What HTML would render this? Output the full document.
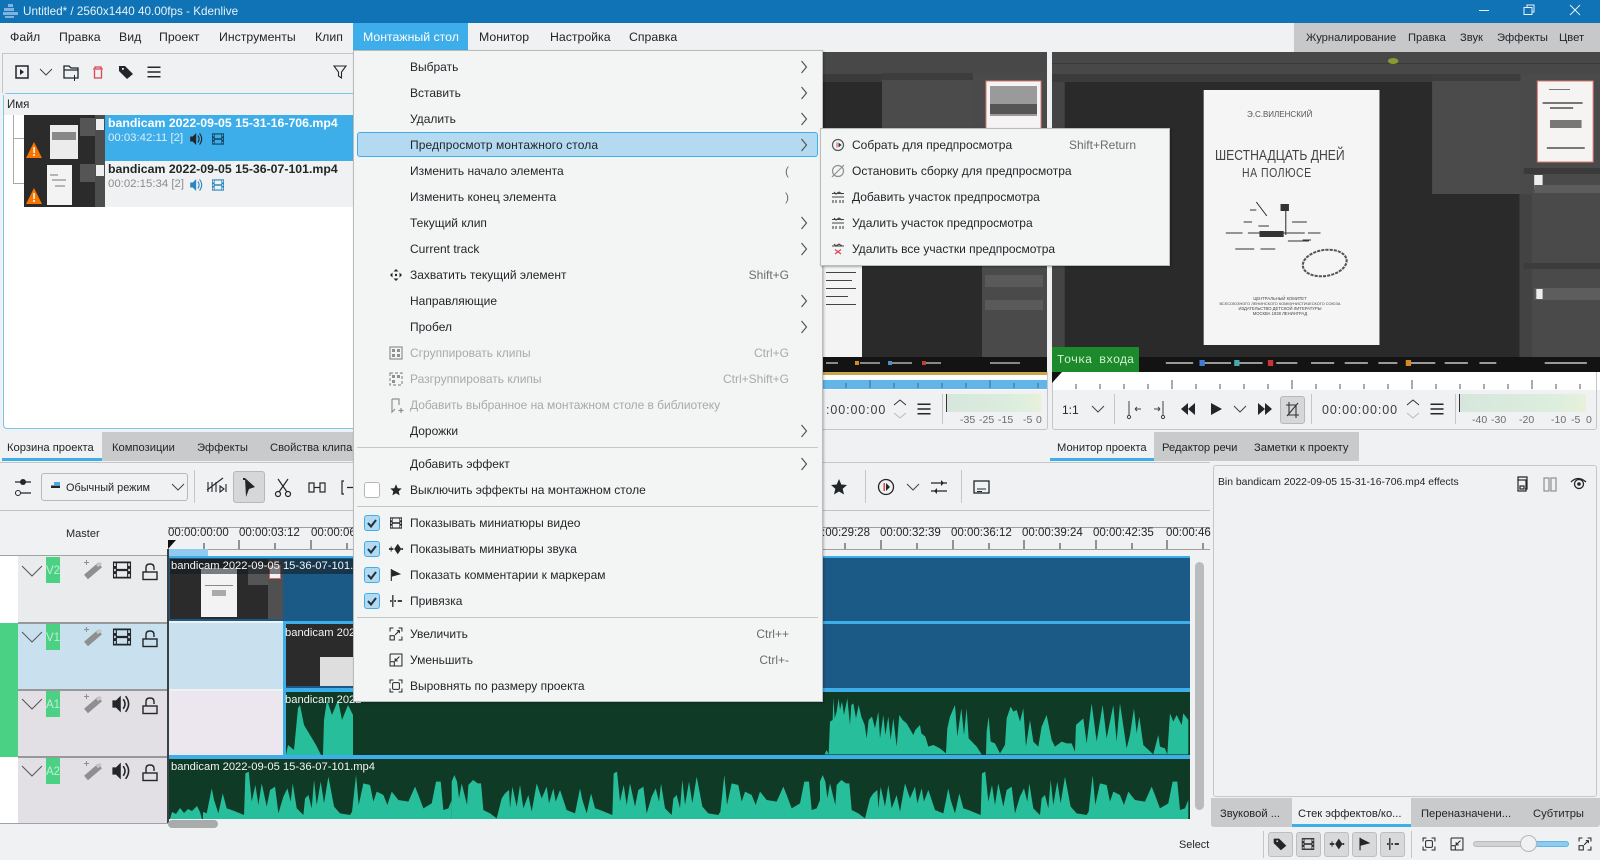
<!DOCTYPE html>
<html lang="ru"><head><meta charset="utf-8"><title>Kdenlive</title>
<style>
html,body{margin:0;padding:0;width:1600px;height:860px;overflow:hidden;background:#eff1f2}
body{position:relative;font-family:"Liberation Sans","Noto Sans CJK SC",sans-serif;font-size:12px;color:#232629}
.b,.t,svg.l{position:absolute}
.t{white-space:nowrap;line-height:16px;height:16px}
svg.l{left:0;top:0}
.dis{color:#a7a9ab}.sc{color:#6a6c6e}
.mono{font-family:"Liberation Mono",monospace}
.mb{font-size:12.3px}
.wk{font-size:11.2px}
.tb{font-size:11.2px}
</style></head><body>

<!-- title bar -->
<div class="b" style="left:0;top:0;width:1600px;height:23px;background:#0f73b5"></div>
<div class="t" style="left:23px;top:4px;color:#e8f2f9;font-size:11.7px">Untitled* / 2560x1440 40.00fps - Kdenlive</div>
<!-- menubar -->
<div class="b" style="left:353px;top:23px;width:115px;height:28px;background:#3daee9"></div>
<div class="b" style="left:1294px;top:23px;width:306px;height:29px;background:#c6c8ca"></div>
<div class="t mb" style="left:10px;top:29px">Файл</div>
<div class="t mb" style="left:59px;top:29px">Правка</div>
<div class="t mb" style="left:119px;top:29px">Вид</div>
<div class="t mb" style="left:159px;top:29px">Проект</div>
<div class="t mb" style="left:219px;top:29px">Инструменты</div>
<div class="t mb" style="left:315px;top:29px">Клип</div>
<div class="t mb" style="left:363px;top:29px;color:#fff">Монтажный стол</div>
<div class="t mb" style="left:479px;top:29px">Монитор</div>
<div class="t mb" style="left:550px;top:29px">Настройка</div>
<div class="t mb" style="left:629px;top:29px">Справка</div>
<div class="t wk" style="left:1306px;top:30px">Журналирование</div>
<div class="t wk" style="left:1408px;top:30px">Правка</div>
<div class="t wk" style="left:1460px;top:30px">Звук</div>
<div class="t wk" style="left:1497px;top:30px">Эффекты</div>
<div class="t wk" style="left:1559px;top:30px">Цвет</div>

<!-- project bin -->
<div class="b" style="left:2px;top:53px;width:351px;height:40px;border-top:1px solid #c4c6c8;border-left:1px solid #c4c6c8;box-sizing:border-box"></div>
<div class="b" style="left:3px;top:93px;width:360px;height:336px;background:#fff;border:1px solid #7cc6ec;border-radius:4px;box-sizing:border-box"></div>
<div class="b" style="left:4px;top:94px;width:349px;height:21px;background:#eff1f2"></div>
<div class="t" style="left:7px;top:97px;font-size:11.5px">Имя</div>
<div class="b" style="left:105px;top:115px;width:248px;height:46px;background:#3daee9"></div>
<div class="b" style="left:105px;top:161px;width:248px;height:46px;background:#eff1f2"></div>
<div class="b" style="left:13px;top:115px;width:11px;height:23px;border-left:1px solid #aaa;border-bottom:1px solid #aaa"></div>
<div class="b" style="left:13px;top:138px;width:11px;height:45px;border-left:1px solid #aaa;border-bottom:1px solid #aaa"></div>
<div class="t" style="left:108px;top:115px;color:#fff;font-weight:bold;font-size:12.3px">bandicam 2022-09-05 15-31-16-706.mp4</div>
<div class="t" style="left:108px;top:130px;color:#dceefa;font-size:11.4px">00:03:42:11 [2]</div>
<div class="t" style="left:108px;top:161px;font-weight:bold;font-size:12.3px">bandicam 2022-09-05 15-36-07-101.mp4</div>
<div class="t" style="left:108px;top:176px;color:#8a8c8e;font-size:11.4px">00:02:15:34 [2]</div>

<!-- bin tabs -->
<div class="b" style="left:102px;top:432px;width:252px;height:29px;background:#c8cacb"></div>
<div class="b" style="left:2px;top:458px;width:100px;height:3px;background:#3daee9"></div>
<div class="b" style="left:0;top:462px;width:1210px;height:1px;background:#c4c6c8"></div>
<div class="t tb" style="left:7px;top:440px">Корзина проекта</div>
<div class="t tb" style="left:112px;top:440px">Композиции</div>
<div class="t tb" style="left:197px;top:440px">Эффекты</div>
<div class="t tb" style="left:270px;top:440px">Свойства клипа</div>

<!-- timeline toolbar -->
<div class="b" style="left:41px;top:473px;width:147px;height:28px;border:1px solid #b6b8ba;border-radius:3px;box-sizing:border-box;background:#eff1f2"></div>
<div class="t" style="left:66px;top:480px;font-size:10.9px">Обычный режим</div>
<div class="b" style="left:194px;top:470px;width:1px;height:33px;background:#c4c6c8"></div>
<div class="b" style="left:233px;top:471px;width:32px;height:32px;background:#d5d7d9;border:1px solid #b6b8ba;border-radius:3px;box-sizing:border-box"></div>
<div class="b" style="left:0;top:510px;width:1210px;height:1px;background:#c0c2c4"></div>
<div class="t" style="left:66px;top:526px;font-size:11px">Master</div>

<!-- ruler -->
<div class="b" style="left:168px;top:527px;width:1042px;height:1px;background:#9c9ea0"></div>
<div class="b" style="left:168px;top:549px;width:1042px;height:1px;background:#9c9ea0"></div>
<div class="t" style="left:168px;top:525px;font-size:11.5px">00:00:00:00</div>
<div class="t" style="left:239px;top:525px;font-size:11.5px">00:00:03:12</div>
<div class="t" style="left:311px;top:525px;font-size:11.5px">00:00:06</div>
<div class="t" style="left:822px;top:525px;font-size:11.5px">:00:29:28</div>
<div class="t" style="left:880px;top:525px;font-size:11.5px">00:00:32:39</div>
<div class="t" style="left:951px;top:525px;font-size:11.5px">00:00:36:12</div>
<div class="t" style="left:1022px;top:525px;font-size:11.5px">00:00:39:24</div>
<div class="t" style="left:1093px;top:525px;font-size:11.5px">00:00:42:35</div>
<div class="t" style="left:1166px;top:525px;font-size:11.5px">00:00:46</div>
<div class="b" style="left:168px;top:549px;width:40px;height:7px;background:#8fcaef"></div>

<!-- track headers -->
<div class="b" style="left:0;top:556px;width:18px;height:67px;background:#fff"></div>
<div class="b" style="left:0;top:623px;width:18px;height:134px;background:#4bd184"></div>
<div class="b" style="left:0;top:757px;width:18px;height:66px;background:#fff"></div>
<div class="b" style="left:18px;top:556px;width:150px;height:66px;background:#eaebec"></div>
<div class="b" style="left:18px;top:623px;width:150px;height:67px;background:#c9e0ee"></div>
<div class="b" style="left:18px;top:691px;width:150px;height:66px;background:#e3e0e5"></div>
<div class="b" style="left:18px;top:758px;width:150px;height:65px;background:#e3e0e5"></div>
<div class="b" style="left:0;top:555px;width:168px;height:1px;background:#a0a2a4"></div>
<div class="b" style="left:18px;top:622px;width:150px;height:2px;background:#96989a"></div>
<div class="b" style="left:18px;top:689px;width:150px;height:2px;background:#96989a"></div>
<div class="b" style="left:18px;top:756px;width:150px;height:2px;background:#96989a"></div>
<div class="b" style="left:0;top:823px;width:168px;height:1px;background:#a0a2a4"></div>
<div class="b" style="left:46px;top:557px;width:14px;height:26px;background:#4bd184"></div>
<div class="b" style="left:46px;top:624px;width:14px;height:26px;background:#4bd184"></div>
<div class="b" style="left:46px;top:691px;width:14px;height:26px;background:#4bd184"></div>
<div class="b" style="left:46px;top:758px;width:14px;height:26px;background:#4bd184"></div>
<div class="t" style="left:46px;top:563px;width:14px;text-align:center;font-size:11.5px;color:#c4ecd4">V2</div>
<div class="t" style="left:46px;top:630px;width:14px;text-align:center;font-size:11.5px;color:#c4ecd4">V1</div>
<div class="t" style="left:46px;top:697px;width:14px;text-align:center;font-size:11.5px;color:#c4ecd4">A1</div>
<div class="t" style="left:46px;top:764px;width:14px;text-align:center;font-size:11.5px;color:#c4ecd4">A2</div>

<!-- tracks background -->
<div class="b" style="left:169px;top:623px;width:115px;height:66px;background:#c9e0ee"></div>
<div class="b" style="left:169px;top:691px;width:115px;height:66px;background:#ece7ef"></div>
<div class="b" style="left:169px;top:556px;width:1021px;height:65px;background:#1b5a86;border-top:2px solid #3daee9;box-sizing:border-box"></div>
<div class="b" style="left:170px;top:559px;width:113px;height:60px;background:#2b2b2b"></div>
<div class="b" style="left:201px;top:568px;width:36px;height:49px;background:#f3f3f3"></div>
<div class="b" style="left:205px;top:585px;width:28px;height:1px;background:#888"></div>
<div class="b" style="left:212px;top:590px;width:14px;height:6px;background:#aaa"></div>
<div class="b" style="left:248px;top:565px;width:20px;height:20px;background:#555"></div>
<div class="b" style="left:268px;top:559px;width:15px;height:60px;background:#505050"></div>
<div class="b" style="left:269px;top:565px;width:12px;height:14px;background:#f4f4f4;border:1px solid #d66;box-sizing:border-box"></div>
<div class="b" style="left:283px;top:621px;width:907px;height:68px;background:#1b5a86;border-top:3px solid #3daee9;border-left:3px solid #3daee9;box-sizing:border-box"></div>
<div class="b" style="left:286px;top:624px;width:67px;height:62px;background:#2b2b2b"></div>
<div class="b" style="left:320px;top:657px;width:33px;height:29px;background:#dedede"></div>
<div class="b" style="left:283px;top:688px;width:907px;height:70px;background:#0f3a26;border-top:4px solid #3daee9;border-left:3px solid #3daee9;box-sizing:border-box"></div>
<div class="b" style="left:169px;top:755px;width:1021px;height:64px;background:#0f3a26;border-top:4px solid #3daee9;box-sizing:border-box"></div>
<svg class="l" width="1600" height="860" viewBox="0 0 1600 860">
<defs>
<path id="w2" fill="#27bf9b" d="M0 403L0 290 8 270 16 290 22 340 30 295 46 360 50 300 64 285 78 295 88 295 95 375 115 385 135 400 150 340 160 325 172 315 175 370 182 305 195 365 205 300 215 370 230 330 240 380 255 295 270 340 285 305 292 355 305 310 312 350 325 315 345 375 370 385 385 310 392 345 405 385 418 325 430 370 445 375 470 385 482 390 486 265 496 260 505 350 516 300 525 360 535 295 550 365 560 315 575 305 585 385 600 335 612 310 622 350 628 295 640 370 660 390 665 340 675 330 685 370 692 285 700 360 712 290 722 355 735 275 752 365 770 385 800 390 806 380 818 270 826 360 840 295 860 300 870 350 880 320 900 330 912 360 925 320 945 345 975 350 995 305 1005 330 1020 370 1045 355 1058 290 1072 290 1080 375 1095 370 1105 345 1105 403Z"/>
<clipPath id="c2"><rect x="169" y="759" width="1021" height="60"/></clipPath>
</defs>
<path fill="#27bf9b" d="M286 755L288 745 294 750 298 708 300 705 304 725 316 745 321 755 323 755 324 720 327 700 332 715 338 700 342 720 348 705 353 715V755Z"/>
<g transform="translate(820 685) scale(.3333)">
<path fill="#27bf9b" d="M0 208L14 208 20 195 26 208 30 110 38 105 40 38 44 100 50 80 56 40 60 75 66 50 72 90 82 40 90 120 94 60 100 55 108 100 116 60 124 95 134 120 140 160 146 105 156 95 165 130 175 80 180 160 190 90 196 150 205 95 212 165 220 100 230 185 238 90 248 105 260 115 280 150 286 135 300 120 304 145 316 155 325 185 340 180 360 190 378 205 382 130 390 95 405 60 412 155 424 70 432 150 440 70 446 160 470 185 485 208 498 208 500 140 506 95 512 170 525 175 540 205 555 180 560 100 572 65 580 80 590 75 600 110 610 70 618 185 630 105 640 170 655 185 665 125 680 90 695 165 705 185 725 170 740 175 755 175 765 200 768 120 790 100 800 175 815 55 830 170 848 60 860 160 880 60 890 170 900 55 920 190 930 150 942 70 950 145 958 95 970 180 1000 208 1015 150 1020 185 1035 190 1042 208 1050 85 1060 110 1070 90 1085 120 1090 85 1105 105V208Z"/>
</g>
<g clip-path="url(#c2)"><g transform="translate(820 685) scale(.3333)">
<use href="#w2"/>
<use href="#w2" x="-1105"/>
<use href="#w2" x="-2210"/>
</g></g>
<rect x="169" y="759" width="34" height="60" fill="#0f3a26"/>
<path fill="#27bf9b" d="M170 819L172 812 176 814 180 808 184 813 188 809 192 811 197 806 200 812 202 819Z"/>
</svg>
<div class="b" style="left:167px;top:549px;width:2px;height:274px;background:#3b4045"></div>
<div class="b" style="left:170px;top:559px;width:206px;height:15px;background:rgba(20,25,30,.55)"></div>
<div class="t" style="left:171px;top:558px;color:#f4f4f4;font-size:11.2px">bandicam 2022-09-05 15-36-07-101.m</div>
<div class="t" style="left:285px;top:625px;color:#f4f4f4;font-size:11.2px">bandicam 2022</div>
<div class="t" style="left:285px;top:692px;color:#f4f4f4;font-size:11.2px">bandicam 2022</div>
<div class="t" style="left:171px;top:759px;color:#f4f4f4;font-size:11.2px">bandicam 2022-09-05 15-36-07-101.mp4</div>
<div class="b" style="left:1195px;top:562px;width:9px;height:248px;background:#b9bbbd;border-radius:5px"></div>
<div class="b" style="left:168px;top:820px;width:50px;height:8px;background:#a8aaac;border-radius:4px"></div>

<!-- monitors: video -->
<svg class="l" width="1600" height="860" viewBox="0 0 1600 860">
<!-- left monitor -->
<rect x="822" y="52" width="225" height="320" fill="#2a2a2a"/>
<rect x="822" y="52" width="225" height="22" fill="#484848"/>
<rect x="822" y="74" width="225" height="8" fill="#3a3a3a"/>
<rect x="882" y="73" width="91" height="60" fill="#4b4b4b"/>
<rect x="882" y="73" width="91" height="7" fill="#3d3d3d"/>
<rect x="973" y="73" width="74" height="62" fill="#4a4a4a"/>
<rect x="982" y="135" width="65" height="228" fill="#4a4a4a"/>
<rect x="986" y="81" width="55" height="50" fill="#f5f3f3" stroke="#d97a72"/>
<rect x="990" y="86" width="47" height="30" fill="#9a9a9a"/>
<rect x="990" y="104" width="47" height="10" fill="#555"/>
<rect x="822" y="262" width="40" height="95" fill="#f4f4f4"/>
<g fill="#444"><rect x="826" y="272" width="30" height="1"/><rect x="826" y="280" width="26" height="1"/><rect x="826" y="288" width="30" height="1"/><rect x="826" y="296" width="22" height="1"/><rect x="826" y="304" width="30" height="1"/></g>
<rect x="985" y="275" width="58" height="12" fill="#5a5a5a"/><rect x="985" y="300" width="58" height="10" fill="#5a5a5a"/>
<rect x="822" y="357" width="225" height="15" fill="#131313"/>
<g fill="#888"><rect x="826" y="362" width="12" height="2"/><rect x="860" y="362" width="20" height="2"/><rect x="890" y="362" width="22" height="2"/><rect x="925" y="362" width="16" height="2"/><rect x="990" y="362" width="30" height="2"/></g>
<rect x="855" y="361" width="4" height="4" fill="#d68a20"/><rect x="888" y="361" width="4" height="4" fill="#4a8ed0"/><rect x="922" y="361" width="4" height="4" fill="#c04030"/>
<!-- right monitor -->
<g transform="translate(1050 0) scale(1.0526 1) translate(-1050 0)">
<rect x="1052" y="52" width="548" height="320" fill="#2a2a2a"/>
<rect x="1052" y="52" width="548" height="22" fill="#484848"/>
<rect x="1052" y="63" width="548" height="1" fill="#3a3a3a"/>
<rect x="1052" y="74" width="548" height="8" fill="#3b3b3b"/>
<rect x="1052" y="82" width="12" height="275" fill="#444"/>
<rect x="1413" y="74" width="84" height="120" fill="#4b4b4b"/>
<rect x="1413" y="74" width="84" height="7" fill="#3d3d3d"/>
<rect x="1497" y="74" width="103" height="283" fill="#4a4a4a"/>
<rect x="1496" y="194" width="12" height="163" fill="#434343"/>
<ellipse cx="1376" cy="61" rx="5" ry="3" fill="#8a9a30"/>
<rect x="1513" y="81" width="53" height="81" fill="#f6f3f3" stroke="#d97a72"/>
<g fill="#777"><rect x="1524" y="89" width="20" height="1"/><rect x="1518" y="102" width="38" height="2"/><rect x="1525" y="107" width="22" height="2"/><rect x="1525" y="120" width="30" height="8"/><rect x="1522" y="147" width="36" height="2"/></g>
<rect x="1500" y="168" width="100" height="6" fill="#3a3a3a"/>
<rect x="1510" y="175" width="8" height="14" fill="#eee"/><rect x="1510" y="185" width="88" height="8" fill="#5d5d5d"/>
<rect x="1500" y="263" width="100" height="6" fill="#3c3c3c"/>
<rect x="1510" y="288" width="88" height="12" fill="#5d5d5d"/><rect x="1512" y="289" width="6" height="10" fill="#eee"/>
<rect x="1196" y="90" width="167" height="255" fill="#f5f5f5"/>
<!-- book drawing -->
<g stroke="#333" fill="none" stroke-width="1">
<path d="M1246 202l10 14M1274 205v30M1217 233h16m5 0h22m4 0h28m3 0h12M1226 249h18m6 0h14m12-8h20M1234 222h8m6 4h10M1290 240h8M1240 210h6M1280 222h14"/>
</g>
<rect x="1249" y="231" width="23" height="6" fill="#333"/>
<rect x="1269" y="204" width="8" height="7" fill="#333"/>
<ellipse cx="1311" cy="263" rx="21" ry="13" fill="none" stroke="#555" stroke-width="2" stroke-dasharray="3 1" transform="rotate(-10 1311 263)"/>
<!-- taskbar -->
<rect x="1052" y="357" width="548" height="15" fill="#131313"/>
<g fill="#999"><rect x="1160" y="362" width="26" height="2"/><rect x="1196" y="362" width="26" height="2"/><rect x="1230" y="362" width="22" height="2"/><rect x="1265" y="362" width="20" height="2"/><rect x="1298" y="362" width="22" height="2"/><rect x="1330" y="362" width="22" height="2"/><rect x="1362" y="362" width="18" height="2"/><rect x="1390" y="362" width="26" height="2"/><rect x="1425" y="362" width="22" height="2"/><rect x="1458" y="362" width="16" height="2"/><rect x="1520" y="362" width="40" height="2"/></g>
<rect x="1192" y="360" width="5" height="6" fill="#3a7fd0"/><rect x="1225" y="360" width="5" height="6" fill="#4aa"/><rect x="1257" y="360" width="5" height="6" fill="#c33"/><rect x="1388" y="360" width="5" height="6" fill="#d68a20"/>
</g>
</svg>
<div class="t" style="left:1247px;top:107px;font-size:8px;color:#555">Э.С.ВИЛЕНСКИЙ</div>
<div class="t" style="left:1215px;top:148px;font-size:14.5px;color:#444;transform:scaleX(.84);transform-origin:left center">ШЕСТНАДЦАТЬ ДНЕЙ</div>
<div class="t" style="left:1242px;top:165px;font-size:12.5px;color:#444;letter-spacing:.6px;transform:scaleX(.84);transform-origin:left center">НА ПОЛЮСЕ</div>
<div class="t" style="left:1215px;width:130px;text-align:center;top:296px;font-size:4.2px;color:#444;line-height:5px;height:5px">ЦЕНТРАЛЬНЫЙ КОМИТЕТ</div>
<div class="t" style="left:1215px;width:130px;text-align:center;top:301px;font-size:3.9px;color:#444;line-height:5px;height:5px">ВСЕСОЮЗНОГО ЛЕНИНСКОГО КОММУНИСТИЧЕСКОГО СОЮЗА</div>
<div class="t" style="left:1215px;width:130px;text-align:center;top:306px;font-size:4.2px;color:#444;line-height:5px;height:5px">ИЗДАТЕЛЬСТВО ДЕТСКОЙ ЛИТЕРАТУРЫ</div>
<div class="t" style="left:1215px;width:130px;text-align:center;top:311px;font-size:4.2px;color:#444;line-height:5px;height:5px">МОСКВА 1938 ЛЕНИНГРАД</div>
<div class="b" style="left:1052px;top:347px;width:87px;height:25px;background:#1c8a2a"></div>
<div class="t mono" style="left:1057px;top:352px;font-size:12px;letter-spacing:-.2px;color:#d6f0d8">Точка входа</div>

<!-- monitor rulers and controls -->
<div class="b" style="left:822px;top:372px;width:225px;height:18px;background:#fff"></div>
<div class="b" style="left:822px;top:372px;width:225px;height:3px;background:#c9a64a"></div>
<div class="b" style="left:822px;top:380px;width:225px;height:9px;background:#62b5e8"></div>
<div class="b" style="left:1052px;top:372px;width:548px;height:18px;background:#fff"></div>
<div class="b" style="left:822px;top:372px;width:226px;height:58px;border-right:1px solid #c4c6c8;border-bottom:1px solid #c4c6c8;border-radius:0 0 3px 0;box-sizing:border-box"></div>
<div class="b" style="left:1052px;top:372px;width:545px;height:58px;border:1px solid #c4c6c8;border-top:0;border-radius:0 0 3px 3px;box-sizing:border-box"></div>
<div class="b" style="left:946px;top:394px;width:95px;height:18px;background:linear-gradient(90deg,#d6e6dc,#dceede 75%,#e8f0da)"></div>
<div class="b" style="left:1459px;top:394px;width:127px;height:18px;background:linear-gradient(90deg,#d6e6dc,#dceede 75%,#e8f0da)"></div>
<div class="b" style="left:1280px;top:396px;width:25px;height:28px;background:#d5d7d9;border:1px solid #b6b8ba;border-radius:3px;box-sizing:border-box"></div>
<div class="t" style="left:1062px;top:402px;font-size:12px">1:1</div>
<div class="t" style="left:1322px;top:402px;font-size:12.5px;letter-spacing:.9px;color:#3a3d40">00:00:00:00</div>
<div class="t" style="left:826px;top:402px;font-size:12.5px;letter-spacing:.9px;color:#3a3d40">:00:00:00</div>
<div class="t sc" style="left:960px;top:412px;font-size:10.5px">-35</div><div class="t sc" style="left:979px;top:412px;font-size:10.5px">-25</div><div class="t sc" style="left:998px;top:412px;font-size:10.5px">-15</div><div class="t sc" style="left:1023px;top:412px;font-size:10.5px">-5</div><div class="t sc" style="left:1036px;top:412px;font-size:10.5px">0</div>
<div class="t sc" style="left:1472px;top:412px;font-size:10.5px">-40</div><div class="t sc" style="left:1491px;top:412px;font-size:10.5px">-30</div><div class="t sc" style="left:1519px;top:412px;font-size:10.5px">-20</div><div class="t sc" style="left:1551px;top:412px;font-size:10.5px">-10</div><div class="t sc" style="left:1571px;top:412px;font-size:10.5px">-5</div><div class="t sc" style="left:1586px;top:412px;font-size:10.5px">0</div>

<!-- monitor tabs -->
<div class="b" style="left:1154px;top:432px;width:205px;height:29px;background:#c8cacb"></div>
<div class="b" style="left:1050px;top:458px;width:104px;height:3px;background:#3daee9"></div>
<div class="t tb" style="left:1057px;top:440px">Монитор проекта</div>
<div class="t tb" style="left:1162px;top:440px">Редактор речи</div>
<div class="t tb" style="left:1254px;top:440px">Заметки к проекту</div>

<!-- effect panel -->
<div class="b" style="left:1213px;top:465px;width:384px;height:332px;border:1px solid #c4c6c8;border-radius:3px;box-sizing:border-box"></div>
<div class="t" style="left:1218px;top:475px;font-size:10.4px">Bin bandicam 2022-09-05 15-31-16-706.mp4 effects</div>
<div class="b" style="left:1211px;top:798px;width:389px;height:29px;background:#c8cacb;border-radius:0 0 3px 3px"></div>
<div class="b" style="left:1292px;top:798px;width:119px;height:29px;background:#eff1f2"></div>
<div class="b" style="left:1292px;top:824px;width:119px;height:3px;background:#3daee9"></div>
<div class="t tb" style="left:1220px;top:806px">Звуковой ...</div>
<div class="t tb" style="left:1298px;top:806px">Стек эффектов/ко...</div>
<div class="t tb" style="left:1421px;top:806px">Переназначени...</div>
<div class="t tb" style="left:1533px;top:806px">Субтитры</div>

<!-- status bar -->
<div class="t" style="left:1179px;top:837px;font-size:10.9px">Select</div>
<div class="b" style="left:1263px;top:831px;width:1px;height:27px;background:#c4c6c8"></div>
<div class="b" style="left:1411px;top:831px;width:1px;height:27px;background:#c4c6c8"></div>
<div class="b" style="left:1268px;top:832px;width:25px;height:25px;background:#d7d9da;border:1px solid #bcbec0;border-radius:3px;box-sizing:border-box"></div>
<div class="b" style="left:1296px;top:832px;width:25px;height:25px;background:#d7d9da;border:1px solid #bcbec0;border-radius:3px;box-sizing:border-box"></div>
<div class="b" style="left:1324px;top:832px;width:25px;height:25px;background:#d7d9da;border:1px solid #bcbec0;border-radius:3px;box-sizing:border-box"></div>
<div class="b" style="left:1352px;top:832px;width:25px;height:25px;background:#d7d9da;border:1px solid #bcbec0;border-radius:3px;box-sizing:border-box"></div>
<div class="b" style="left:1380px;top:832px;width:25px;height:25px;background:#d7d9da;border:1px solid #bcbec0;border-radius:3px;box-sizing:border-box"></div>
<div class="b" style="left:1473px;top:841px;width:96px;height:6px;background:#d0d2d4;border:1px solid #bbb;border-radius:4px;box-sizing:border-box"></div>
<div class="b" style="left:1528px;top:841px;width:41px;height:6px;background:#8fcaef;border:1px solid #5db8e8;border-radius:4px;box-sizing:border-box"></div>
<div class="b" style="left:1520px;top:835px;width:17px;height:17px;background:#eff1f2;border:1px solid #b4b6b8;border-radius:50%;box-sizing:border-box"></div>

<!-- icons base layer -->
<svg class="l" width="1600" height="860" viewBox="0 0 1600 860" style="color:#232629">
<defs>
<path id="film" fill="currentColor" fill-rule="evenodd" d="M-8-7.500H8V7.500H-8ZM-4.500-6V-1H4.500V-6ZM-4.500 1V6H4.500V1ZM-7-6V-3.500H-5.500V-6ZM-7-1V1H-5.500V-1ZM-7 3.500V6H-5.500V3.500ZM5.500-6V-3.500H7V-6ZM5.500-1V1H7V-1ZM5.500 3.500V6H7V3.500Z"/>
<g id="spk"><path fill="currentColor" d="M-8-3H-5L-1-7V7L-5 3H-8Z"/><path fill="none" stroke="currentColor" stroke-width="1.300" d="M1-4Q4 0 1 4M3-6.500Q8 0 3 6.500"/></g>
<g id="lock" fill="none" stroke="currentColor" stroke-width="1.400"><rect x="-7" y="0" width="14" height="7.500"/><path d="M-4 0V-4.500Q-4-8 0-8T4-4.500V-2"/></g>
<g id="wand"><path stroke="#8d8f91" stroke-width="6" d="M-7 7L7-5"/><path stroke="#c4c6c8" stroke-width="3" d="M4-4L8-7"/><path fill="#8d8f91" d="M-9-8h2v-2h1v2h2v1h-2v2h-1v-2h-2z"/></g>
<path id="chv" fill="none" stroke="currentColor" stroke-width="1" d="M-6-3L0 3L6-3"/>
<path id="chb" fill="none" stroke="currentColor" stroke-width="1" d="M-10-5L0 5L10-5"/>
<path id="ham" fill="currentColor" d="M-6.500-5.500H6.500V-4H-6.500ZM-6.500-.7H6.500V.7H-6.500ZM-6.500 4H6.500V5.500H-6.500Z"/>
<path id="tag" fill="currentColor" fill-rule="evenodd" d="M-7-6H-1L7 2L1 7L-7-1ZM-4-4V-2.200H-2.200V-4Z"/>
<g id="wave" fill="currentColor"><path d="M-8-1h2v-2h1v2h2v2h-2v2h-1v-2h-2zM2-6L6 0L2 6L-2 0Z"/><path d="M6-1H8V1H6Z"/></g>
<g id="flag"><path fill="currentColor" d="M-6-7L6-1L-5 2V-7Z"/><path stroke="currentColor" stroke-width="1.300" d="M-5.500-7V7"/></g>
<g id="snap" fill="currentColor"><path d="M-4.500-7H-3V7H-4.500Z"/><path d="M-7-1H-5V1H-7ZM-2-1H0V1H-2ZM2-1H7V1H2Z"/></g>
<g id="zin" fill="none" stroke="currentColor" stroke-width="1.200"><path d="M-7-3V-7H-3M3-7H7V-3M7 3V7H3"/><rect x="-7" y="2" width="5" height="5"/><path d="M-1 1L4-4M1-4H4V-1"/></g>
<g id="zout" fill="none" stroke="currentColor" stroke-width="1.200"><path d="M-7-7H7V7H-2M-7-7V1"/><rect x="-7" y="2" width="5" height="5"/><path d="M4-4L-1 1M-1-2V1H2"/></g>
<g id="fit" fill="none" stroke="currentColor" stroke-width="1.200"><path d="M-7-3V-7H-3M3-7H7V-3M7 3V7H3M-3 7H-7V3"/><rect x="-4" y="-4" width="8" height="8" rx="1.500"/></g>
<path id="star" fill="currentColor" d="M0-8L2.300-2.500L8-2L3.700 1.700L5 7.500L0 4.500L-5 7.500L-3.700 1.700L-8-2L-2.300-2.500Z"/>
</defs>
<!-- app icon -->
<g fill="#7fb2dc"><rect x="8" y="4" width="5" height="3"/><rect x="4" y="8" width="10" height="3"/><rect x="3" y="12" width="15" height="3"/><rect x="5" y="16" width="9" height="2"/></g>
<!-- window buttons -->
<g stroke="#e8f2f9" fill="none" stroke-width="1"><path d="M1479 10.500H1489"/><rect x="1524" y="7.500" width="8" height="7"/><path d="M1527 7V5H1534V12H1532"/><path d="M1570 5L1580 15M1580 5L1570 15"/></g>
<!-- bin toolbar -->
<g><rect x="16" y="66" width="12" height="12" fill="none" stroke="#232629" stroke-width="1.500"/><path fill="#232629" d="M20 69l4 3-4 3z"/></g>
<use href="#chv" x="46" y="72" style="color:#444"/>
<path d="M64 66h5l2 2h7v10h-14zM64 70h14" fill="none" stroke="#232629" stroke-width="1.300"/><path d="M72 78h5M74.500 75v6" stroke="#232629"/>
<path d="M93 69h10M95 69v-2h6v2M94.500 70v8h7v-8" fill="none" stroke="#da4453" stroke-width="1.300"/>
<use href="#tag" x="126" y="72"/>
<use href="#ham" x="154" y="72"/>
<path d="M334 66h12l-4.500 6v6l-3-2v-4z" fill="none" stroke="#232629" stroke-width="1.100"/>
<!-- list icons -->
<g><rect x="24" y="115" width="81" height="46" fill="#2b2b2b"/><rect x="50" y="125" width="28" height="34" fill="#ececec"/><rect x="52" y="132" width="24" height="8" fill="#888"/><rect x="80" y="118" width="15" height="18" fill="#555"/><rect x="95" y="115" width="10" height="46" fill="#4d4d4d"/><rect x="96" y="119" width="8" height="11" fill="#eee"/><path d="M34 142L42 158H26Z" fill="#f67400"/><rect x="33.300" y="147" width="1.500" height="6" fill="#fff"/><rect x="33.300" y="154" width="1.500" height="2" fill="#fff"/></g>
<g><rect x="24" y="161" width="81" height="46" fill="#2b2b2b"/><rect x="47" y="165" width="25" height="40" fill="#f3f3f3"/><path d="M52 180h14M55 186h10M50 175h8" stroke="#777"/><rect x="80" y="164" width="15" height="18" fill="#555"/><rect x="95" y="161" width="10" height="46" fill="#4d4d4d"/><rect x="96" y="165" width="8" height="11" fill="#eee"/><path d="M34 188L42 204H26Z" fill="#f67400"/><rect x="33.300" y="193" width="1.500" height="6" fill="#fff"/><rect x="33.300" y="200" width="1.500" height="2" fill="#fff"/></g>
<use href="#spk" transform="translate(197 139) scale(.85)"/><use href="#film" transform="translate(218 139) scale(.75)" style="color:#10405e"/>
<use href="#spk" transform="translate(197 185) scale(.85)" style="color:#2a87c0"/><use href="#film" transform="translate(218 185) scale(.75)" style="color:#2a87c0"/>
<!-- timeline toolbar -->
<g stroke="#232629" fill="none" stroke-width="1.200"><path d="M15 482H31M15 493H31"/></g><circle cx="23" cy="482" r="3" fill="#232629"/><circle cx="18" cy="493" r="2.500" fill="#eff1f2" stroke="#232629"/>
<path fill="#232629" d="M51 488h9v-2.500h-9z"/><rect x="54" y="482" width="6" height="3" fill="#3daee9"/>
<use href="#chv" x="178" y="487" style="color:#444"/>
<path d="M207 490L223 478M208 482v10M212 482v10M216 482v10M220 486l4 3-4 3zM226 484v8" stroke="#232629" fill="none" stroke-width="1.100"/>
<path fill="#232629" d="M245 478L255 487L249 489L246 497Z"/><rect x="243" y="478" width="2" height="2" fill="#232629"/>
<g stroke="#232629" fill="none" stroke-width="1.200"><path d="M278 479L287 492M288 479L279 492"/><circle cx="278" cy="494" r="2.500"/><circle cx="288" cy="494" r="2.500"/></g>
<g stroke="#232629" fill="none" stroke-width="1.200"><rect x="309" y="483" width="5" height="9"/><rect x="320" y="483" width="5" height="9"/><path d="M314 487.500H320"/></g>
<path d="M344 481h-2v13h2M347 487.500h6" stroke="#232629" fill="none" stroke-width="1.200"/>
<use href="#star" x="839" y="487"/><rect x="865" y="470" width="1" height="33" fill="#c4c6c8"/>
<circle cx="886" cy="487" r="7.500" fill="none" stroke="#232629" stroke-width="1.300"/><path fill="#da4453" d="M885 483v8h-1.500v-8z"/><path fill="#232629" d="M886 483l4 4-4 4z"/>
<use href="#chv" x="913" y="487" style="color:#444"/>
<path d="M931 483H947M931 491H947" stroke="#232629" stroke-width="1.300"/><path fill="#232629" d="M941 480l3 3-3 3zM937 488l-3 3 3 3z"/>
<rect x="961" y="470" width="1" height="33" fill="#c4c6c8"/>
<rect x="974" y="481" width="15" height="12" fill="none" stroke="#232629" stroke-width="1.300"/><path d="M977 489h9M977 491.500h5" stroke="#232629"/>
<!-- ruler ticks -->
<path stroke="#333" d="M204 543v6M239 540v9M275 543v6M311 540v9M347 543v6M881 540v9M917 543v6M953 540v9M989 543v6M1024 540v9M1060 543v6M1096 540v9M1132 543v6M1167 540v9M1203 543v6M845 543v6" fill="none"/>
<path fill="#111" d="M168 540H176L168 549Z"/>
<!-- tracks icons -->
<g><use href="#chb" x="32" y="571" style="color:#555"/><use href="#wand" x="93" y="570"/><use href="#film" transform="translate(122 570) scale(1.13)"/><use href="#lock" x="150" y="572"/></g>
<g><use href="#chb" x="32" y="637" style="color:#555"/><use href="#wand" x="93" y="637"/><use href="#film" transform="translate(122 637) scale(1.13)"/><use href="#lock" x="150" y="639"/></g>
<g><use href="#chb" x="32" y="704" style="color:#555"/><use href="#wand" x="93" y="704"/><use href="#spk" transform="translate(122 704) scale(1.2)"/><use href="#lock" x="150" y="706"/></g>
<g><use href="#chb" x="32" y="771" style="color:#555"/><use href="#wand" x="93" y="771"/><use href="#spk" transform="translate(122 771) scale(1.2)"/><use href="#lock" x="150" y="773"/></g>
<!-- monitor ticks -->
<path stroke="#555" d="M1076 384v5M1100 384v5M1124 384v5M1148 384v5M1172 380v9M1196 384v5M1220 384v5M1244 384v5M1268 384v5M1292 380v9M1316 384v5M1340 384v5M1364 384v5M1388 384v5M1412 380v9M1436 384v5M1460 384v5M1484 384v5M1508 384v5M1532 380v9M1556 384v5M1580 384v5" fill="none"/>
<path stroke="#3a6f90" d="M846 383v5M870 383v5M870 380v8M894 383v5M918 383v5M942 383v5M990 380v8M966 383v5M1014 383v5M1038 383v5" fill="none"/>
<path fill="#111" d="M1052 372H1062L1052 383Z"/>
<!-- monitor controls -->
<use href="#chv" x="1098" y="409" style="color:#444"/>
<rect x="1114" y="394" width="1" height="30" fill="#c4c6c8"/>
<path d="M1129 401V417M1135 409h6M1135 409l2-2M1135 409l2 2" stroke="#444" fill="none"/><circle cx="1129" cy="417" r="1.600" fill="#eff1f2" stroke="#444"/>
<path d="M1163 401V417M1154 409h6M1160 409l-2-2M1160 409l-2 2" stroke="#444" fill="none"/><circle cx="1163" cy="417" r="1.600" fill="#eff1f2" stroke="#444"/>
<path fill="#232629" d="M1188 403v12l-7-6zM1195 403v12l-7-6zM1211 403l11 6-11 6zM1258 403l7 6-7 6zM1265 403l7 6-7 6z"/>
<use href="#chv" x="1240" y="409" style="color:#444"/>
<path d="M1289 402V415H1299M1286 405H1296V418M1298 403L1287 416" fill="none" stroke="#333" stroke-width="1.100"/>
<rect x="1311" y="394" width="1" height="30" fill="#c4c6c8"/>
<path d="M1407 405L1413 400L1419 405" fill="none" stroke="#333"/><path d="M1407 413L1413 418L1419 413" fill="none" stroke="#bbb"/>
<use href="#ham" x="1437" y="409"/>
<rect x="1455" y="394" width="1" height="30" fill="#c4c6c8"/>
<rect x="1459" y="394" width="1" height="18" fill="#333"/>
<rect x="942" y="394" width="1" height="30" fill="#c4c6c8"/><rect x="946" y="394" width="1" height="18" fill="#333"/>
<path d="M894 405L900 400L906 405" fill="none" stroke="#333"/><path d="M894 413L900 418L906 413" fill="none" stroke="#bbb"/>
<use href="#ham" x="924" y="409"/>
<!-- effect icons -->
<g fill="none" stroke="#232629" stroke-width="1.200"><path d="M1518 480v-3h9v12h-2"/><rect x="1518" y="480" width="8" height="11"/><rect x="1520" y="486" width="4" height="3"/></g>
<g fill="none" stroke="#8d8f91" stroke-width="1.200"><rect x="1544" y="478" width="5" height="13"/><rect x="1551" y="478" width="5" height="13"/></g>
<path d="M1571 482Q1578 475 1586 482" fill="none" stroke="#232629" stroke-width="1.300"/><circle cx="1579" cy="484" r="4.500" fill="none" stroke="#232629" stroke-width="1.300"/><circle cx="1579" cy="484" r="1.800" fill="#232629"/>
<!-- status icons -->
<use href="#tag" transform="translate(1280 844) scale(.9)"/><use href="#film" transform="translate(1308 844) scale(.78)"/><use href="#wave" transform="translate(1337 844) scale(.9)"/><use href="#flag" transform="translate(1365 844) scale(.9)"/><use href="#snap" transform="translate(1393 844) scale(.85)"/>
<use href="#fit" transform="translate(1429 844) scale(.85)"/><use href="#zout" transform="translate(1457 844) scale(.85)"/><use href="#zin" transform="translate(1585 844) scale(.85)"/>
</svg>

<!-- main menu -->
<div class="b" style="left:353px;top:50px;width:470px;height:652px;background:#f3f5f5;border:1px solid #b9bbbd;box-sizing:border-box;box-shadow:1px 1px 2px rgba(0,0,0,.25)"></div>
<div class="b" style="left:357px;top:132px;width:461px;height:25px;background:#b4daf1;border:1px solid #3daee9;border-radius:3px;box-sizing:border-box"></div>
<div class="b" style="left:357px;top:447px;width:461px;height:1px;background:#c4c6c8"></div>
<div class="b" style="left:357px;top:506px;width:461px;height:1px;background:#c4c6c8"></div>
<div class="b" style="left:357px;top:617px;width:461px;height:1px;background:#c4c6c8"></div>
<div class="t" style="left:410px;top:59px">Выбрать</div>
<div class="t" style="left:410px;top:85px">Вставить</div>
<div class="t" style="left:410px;top:111px">Удалить</div>
<div class="t" style="left:410px;top:137px;letter-spacing:.1px">Предпросмотр монтажного стола</div>
<div class="t" style="left:410px;top:163px">Изменить начало элемента</div>
<div class="t sc" style="right:811px;top:163px">(</div>
<div class="t" style="left:410px;top:189px">Изменить конец элемента</div>
<div class="t sc" style="right:811px;top:189px">)</div>
<div class="t" style="left:410px;top:215px">Текущий клип</div>
<div class="t" style="left:410px;top:241px">Current track</div>
<div class="t" style="left:410px;top:267px">Захватить текущий элемент</div>
<div class="t sc" style="right:811px;top:267px">Shift+G</div>
<div class="t" style="left:410px;top:293px">Направляющие</div>
<div class="t" style="left:410px;top:319px">Пробел</div>
<div class="t dis" style="left:410px;top:345px">Сгруппировать клипы</div>
<div class="t dis" style="right:811px;top:345px">Ctrl+G</div>
<div class="t dis" style="left:410px;top:371px">Разгруппировать клипы</div>
<div class="t dis" style="right:811px;top:371px">Ctrl+Shift+G</div>
<div class="t dis" style="left:410px;top:397px;letter-spacing:-.05px">Добавить выбранное на монтажном столе в библиотеку</div>
<div class="t" style="left:410px;top:423px">Дорожки</div>
<div class="t" style="left:410px;top:456px">Добавить эффект</div>
<div class="t" style="left:410px;top:482px">Выключить эффекты на монтажном столе</div>
<div class="t" style="left:410px;top:515px">Показывать миниатюры видео</div>
<div class="t" style="left:410px;top:541px">Показывать миниатюры звука</div>
<div class="t" style="left:410px;top:567px">Показать комментарии к маркерам</div>
<div class="t" style="left:410px;top:593px">Привязка</div>
<div class="t" style="left:410px;top:626px">Увеличить</div>
<div class="t sc" style="right:811px;top:626px">Ctrl++</div>
<div class="t" style="left:410px;top:652px">Уменьшить</div>
<div class="t sc" style="right:811px;top:652px">Ctrl+-</div>
<div class="t" style="left:410px;top:678px">Выровнять по размеру проекта</div>

<!-- submenu -->
<div class="b" style="left:820px;top:128px;width:350px;height:138px;background:#f3f5f5;border:1px solid #b9bbbd;box-sizing:border-box;box-shadow:1px 1px 2px rgba(0,0,0,.3)"></div>
<div class="t" style="left:852px;top:137px">Собрать для предпросмотра</div>
<div class="t sc" style="right:464px;top:137px">Shift+Return</div>
<div class="t" style="left:852px;top:163px">Остановить сборку для предпросмотра</div>
<div class="t" style="left:852px;top:189px">Добавить участок предпросмотра</div>
<div class="t" style="left:852px;top:215px">Удалить участок предпросмотра</div>
<div class="t" style="left:852px;top:241px">Удалить все участки предпросмотра</div>

<!-- menu icons -->
<svg class="l" width="1600" height="860" viewBox="0 0 1600 860" style="color:#232629">
<g fill="none" stroke="#555" stroke-width="1.200"><path d="M801.500 61L806.500 67L801.500 73M801.500 87L806.500 93L801.500 99M801.500 113L806.500 119L801.500 125M801.500 139L806.500 145L801.500 151M801.500 217L806.500 223L801.500 229M801.500 243L806.500 249L801.500 255M801.500 295L806.500 301L801.500 307M801.500 321L806.500 327L801.500 333M801.500 425L806.500 431L801.500 437M801.500 458L806.500 464L801.500 470"/></g>
<path fill="#232629" d="M396 269l2.500 2.500h-5zM396 281l2.500-2.500h-5zM390 275l2.500-2.500v5zM402 275l-2.500-2.500v5z"/><circle cx="396" cy="275" r="1.200" fill="#232629"/>
<g fill="none" stroke="#8d8f91" stroke-width="1.200"><rect x="390" y="347" width="12" height="12"/><rect x="390" y="373" width="12" height="12" stroke-dasharray="3 2"/><path d="M392 399h7v6M392 399v13l3-3M401 408v5M398.500 410.500h5"/></g>
<g fill="#8d8f91"><rect x="392" y="349" width="3" height="3"/><rect x="397" y="349" width="3" height="3"/><rect x="392" y="354" width="3" height="3"/><rect x="397" y="354" width="3" height="3"/><rect x="392" y="375" width="3" height="3"/><rect x="397" y="375" width="3" height="3"/><rect x="392" y="380" width="3" height="3"/></g>
<use href="#star" transform="translate(396 490) scale(.72)"/>
<use href="#film" transform="translate(396 523) scale(.75)"/><use href="#wave" transform="translate(396 549) scale(.88)"/><use href="#flag" transform="translate(396 575) scale(.85)"/><use href="#snap" transform="translate(396 601) scale(.85)"/>
<use href="#zin" transform="translate(396 634) scale(.85)"/><use href="#zout" transform="translate(396 660) scale(.85)"/><use href="#fit" transform="translate(396 686) scale(.85)"/>
<!-- check boxes -->
<rect x="364.500" y="482.500" width="15" height="15" rx="2.500" fill="#fff" stroke="#b4b6b8"/>
<g stroke="#3daee9" fill="#b4daf1"><rect x="364.500" y="515.500" width="15" height="15" rx="2.500"/><rect x="364.500" y="541.500" width="15" height="15" rx="2.500"/><rect x="364.500" y="567.500" width="15" height="15" rx="2.500"/><rect x="364.500" y="593.500" width="15" height="15" rx="2.500"/></g>
<g fill="none" stroke="#1d3340" stroke-width="2"><path d="M368 523L371 526.500L376 520M368 549L371 552.500L376 546M368 575L371 578.500L376 572M368 601L371 604.500L376 598"/></g>
<!-- submenu icons -->
<circle cx="838" cy="145" r="5.500" fill="none" stroke="#555" stroke-width="1.200"/><path fill="#da4453" d="M836.500 142.500h1v5h-1z"/><path fill="#333" d="M838.500 142.500l3 2.500-3 2.500z"/>
<circle cx="838" cy="171" r="5.500" fill="none" stroke="#8d8f91" stroke-width="1.200"/><path d="M832 177L844 165" stroke="#8d8f91" stroke-width="1.200"/>
<g stroke="#444" fill="none" stroke-width="1.100"><path d="M832 193.500h12M832 197h12M833 200v3M836 200v3M840 200v3M843 200v3M834 192l2 2 3-2 3 2"/><path d="M832 219.500h12M832 223h12M833 226v3M836 226v3M840 226v3M843 226v3M834 218l2 2 3-2 3 2"/><path d="M832 246h12M834 244l2 2 3-2 3 2"/></g>
<path d="M835 249.500L841 254M841 249.500L835 254" stroke="#da4453" stroke-width="1.200"/>
</svg>
</body></html>
